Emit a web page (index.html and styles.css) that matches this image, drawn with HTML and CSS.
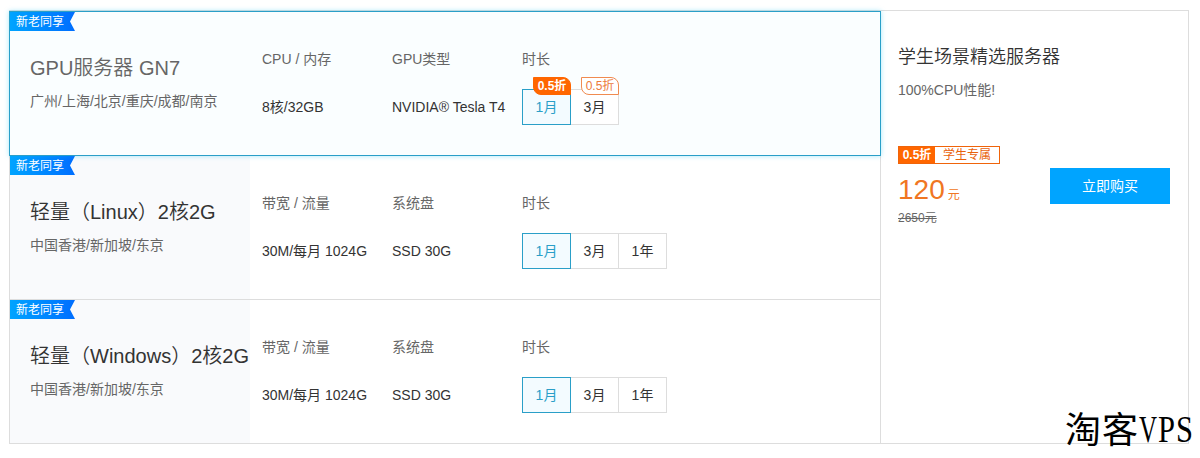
FILE: index.html
```
<!DOCTYPE html>
<html lang="zh-CN">
<head>
    <meta charset="UTF-8">
    <meta name="viewport" content="width=device-width, initial-scale=1.0">
    <title>学生场景精选服务器</title>
    <link rel="stylesheet" href="styles.css">
</head>
<body>

    <main class="panel">
        <div class="server-list">
            <section class="server selected">
                <span class="ribbon">新老同享</span>
                <div class="server-name">
                    <h2>GPU服务器 GN7</h2>
                    <p>广州/上海/北京/重庆/成都/南京</p>
                </div>
                <dl class="spec">
                    <dt>CPU / 内存</dt>
                    <dd>8核/32GB</dd>
                </dl>
                <dl class="spec">
                    <dt>GPU类型</dt>
                    <dd>NVIDIA® Tesla T4</dd>
                </dl>
                <div class="duration">
                    <h3>时长</h3>
                    <div class="options">
                        <button class="active">1月<span class="discount">0.5折</span></button>
                        <button>3月<span class="discount">0.5折</span></button>
                    </div>
                </div>
            </section>

            <section class="server">
                <span class="ribbon">新老同享</span>
                <div class="server-name">
                    <h2>轻量（Linux）2核2G</h2>
                    <p>中国香港/新加坡/东京</p>
                </div>
                <dl class="spec">
                    <dt>带宽 / 流量</dt>
                    <dd>30M/每月 1024G</dd>
                </dl>
                <dl class="spec">
                    <dt>系统盘</dt>
                    <dd>SSD 30G</dd>
                </dl>
                <div class="duration">
                    <h3>时长</h3>
                    <div class="options">
                        <button class="active">1月</button>
                        <button>3月</button>
                        <button>1年</button>
                    </div>
                </div>
            </section>

            <section class="server">
                <span class="ribbon">新老同享</span>
                <div class="server-name">
                    <h2>轻量（Windows）2核2G</h2>
                    <p>中国香港/新加坡/东京</p>
                </div>
                <dl class="spec">
                    <dt>带宽 / 流量</dt>
                    <dd>30M/每月 1024G</dd>
                </dl>
                <dl class="spec">
                    <dt>系统盘</dt>
                    <dd>SSD 30G</dd>
                </dl>
                <div class="duration">
                    <h3>时长</h3>
                    <div class="options">
                        <button class="active">1月</button>
                        <button>3月</button>
                        <button>1年</button>
                    </div>
                </div>
            </section>
        </div>

        <aside class="order">
            <h1>学生场景精选服务器</h1>
            <p class="order-desc">100%CPU性能!</p>
            <div class="order-row">
                <div class="price-box">
                    <div class="tag"><b>0.5折</b><span>学生专属</span></div>
                    <div class="price"><strong>120</strong>元</div>
                    <del>2650元</del>
                </div>
                <button class="buy">立即购买</button>
            </div>
        </aside>
    </main>

    <svg class="watermark" width="136" height="62" viewBox="0 0 136 62">
        <text x="1" y="47" font-size="36" textLength="73">淘客</text>
        <g class="latin">
            <text x="75" y="46" textLength="18" lengthAdjust="spacingAndGlyphs">V</text>
            <text x="94" y="46" textLength="17" lengthAdjust="spacingAndGlyphs">P</text>
            <text x="112" y="46" textLength="17" lengthAdjust="spacingAndGlyphs">S</text>
        </g>
    </svg>

</body>
</html>
```

FILE: styles.css
```
* {
    margin: 0;
    padding: 0;
    box-sizing: border-box;
}

body {
    font-family: "Liberation Sans", "Noto Sans CJK SC", sans-serif;
    font-size: 14px;
    color: #333;
    background: #fff;
    padding: 10px 0 0 9px;
    height: 458px;
    overflow: hidden;
}

h1, h2, h3 {
    font-weight: 350;
}

button {
    font: inherit;
    color: inherit;
    background: #fff;
    border: none;
    cursor: pointer;
}

.panel {
    display: flex;
    width: 1180px;
    height: 434px;
    border: 1px solid #ddd;
}

.server-list {
    width: 871px;
    border-right: 1px solid #ddd;
}

.server {
    position: relative;
    display: flex;
    height: 144px;
    border-top: 1px solid #ddd;
}

.server.selected {
    z-index: 1;
    height: 145px;
    margin: 0 -1px -1px;
    border: 1px solid #2a9fc8;
    background: #fafeff;
    box-shadow: 0 0 5px rgba(0, 190, 240, 0.35);
}

.ribbon {
    position: absolute;
    top: 0;
    left: 0;
    width: 65px;
    height: 19px;
    padding-left: 6px;
    font-size: 12px;
    line-height: 20px;
    color: #fff;
    background: linear-gradient(90deg, #00a4ff, #006eff);
    clip-path: polygon(0 0, 100% 0, 60px 50%, 100% 100%, 0 100%);
}

.server-name {
    width: 240px;
    padding: 41px 0 0 20px;
    background: #f9fafc;
    white-space: nowrap;
}

.selected .server-name {
    background: none;
}

.server-name h2 {
    font-size: 20px;
    line-height: 30px;
}

.selected h2 {
    color: #666;
}

.server-name p {
    margin-top: 6px;
    line-height: 24px;
    color: #666;
}

.spec {
    width: 130px;
    padding: 35px 0 0 12px;
    white-space: nowrap;
}

.spec dt,
.duration h3 {
    font-size: 14px;
    font-weight: 400;
    line-height: 24px;
    color: #666;
}

.spec dd {
    margin-top: 24px;
    line-height: 24px;
}

.duration {
    padding: 35px 0 0 12px;
}

.options {
    display: flex;
    margin-top: 18px;
}

.options button {
    position: relative;
    width: 49px;
    height: 36px;
    margin-right: -1px;
    padding-bottom: 2px;
    border: 1px solid #ddd;
}

.options .active {
    z-index: 1;
    color: #2a9fc8;
    background: #f3fbff;
    border-color: #2a9fc8;
}

.discount {
    position: absolute;
    top: -13px;
    right: -1px;
    width: 38px;
    height: 18px;
    border: 1px solid #f08b50;
    border-radius: 0 8px 0 8px;
    font-size: 12px;
    line-height: 16px;
    color: #ec7a3c;
    background: #fff;
}

.active .discount {
    color: #fff;
    font-weight: bold;
    background: #f60;
    border-color: #f60;
}

.order {
    flex: 1;
    padding: 31px 18px 0 17px;
}

.order h1 {
    font-size: 18px;
    line-height: 30px;
}

.order-desc {
    margin-top: 6px;
    line-height: 24px;
    color: #666;
}

.order-row {
    display: flex;
    justify-content: space-between;
    margin-top: 44px;
}

.tag {
    display: flex;
    width: 102px;
    height: 18px;
    border: 1px solid #f0640a;
    font-size: 12px;
    line-height: 16px;
    color: #e8620c;
    text-align: center;
}

.tag b {
    width: 36px;
    color: #fff;
    background: #f60;
}

.tag span {
    flex: 1;
}

.price {
    margin-top: 10px;
    font-size: 12px;
    line-height: 32px;
    color: #f07622;
}

.price strong {
    margin-right: 3px;
    font-size: 28px;
    font-weight: 400;
}

.price-box del {
    display: block;
    margin-top: -3px;
    font-size: 12px;
    line-height: 20px;
    color: #666;
}

.buy {
    width: 120px;
    height: 36px;
    margin-top: 22px;
    padding-bottom: 2px;
    color: #fff;
    background: #00a4ff;
}

.watermark {
    position: absolute;
    left: 1064px;
    top: 396px;
    font-family: "Noto Sans CJK SC", sans-serif;
    fill: #000;
}

.watermark .latin {
    font-family: "Liberation Serif", serif;
    font-size: 38px;
}
```
